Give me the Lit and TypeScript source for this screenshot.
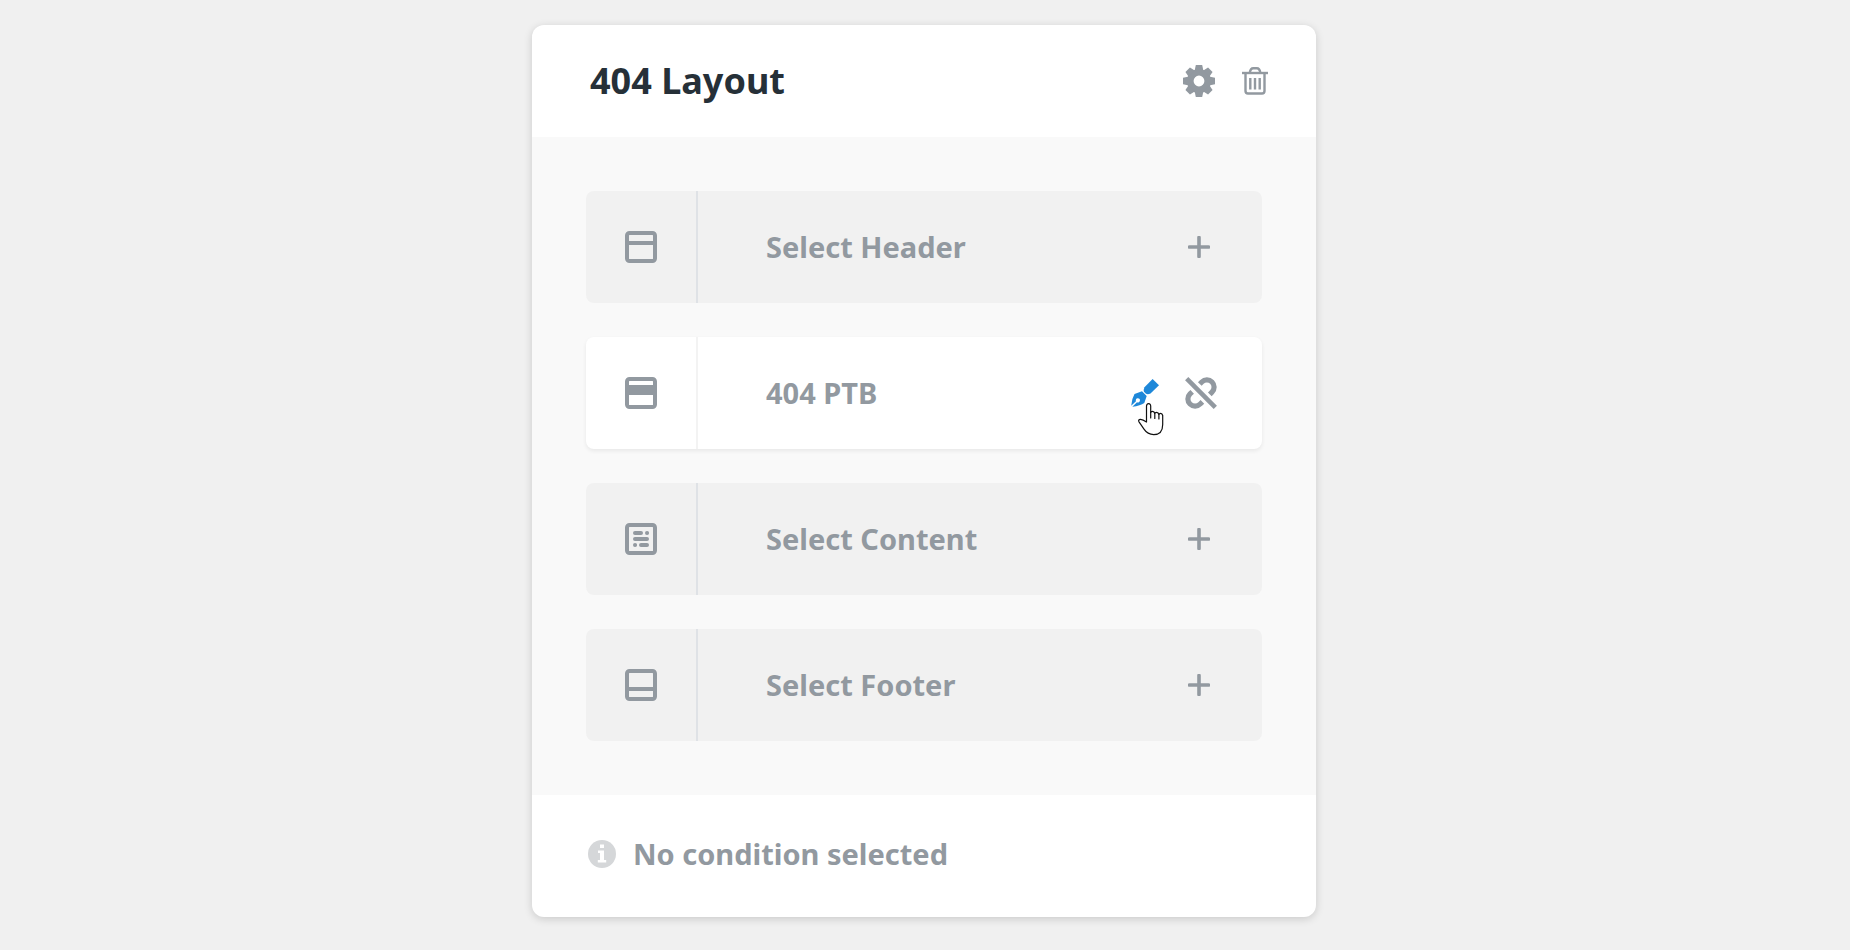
import { LitElement, html, css, svg } from "lit";
import { customElement, property } from "lit/decorators.js";

type Kind = "header" | "body" | "content" | "footer";

const frame = svg`<rect x="2" y="2" width="28" height="28" rx="2.500" fill="none" stroke="currentColor" stroke-width="4"/>`;

const slotIcons = {
  header: svg`${frame}<path d="M2 10h28v4H2z"/>`,
  body: svg`${frame}<path d="M2 8h28v10H2z"/>`,
  content: svg`${frame}<path d="M10 10h6M22 10h.1M10 16h12M10 22h.1M16 22h6" fill="none" stroke="currentColor" stroke-width="4" stroke-linecap="round"/>`,
  footer: svg`${frame}<path d="M2 18h28v4H2z"/>`,
};

const tooth = (angle: number) =>
  svg`<path d="M12.8 0h6.400l1.200 6h-8.800z" transform=${`rotate(${angle} 16 16)`}/>`;

const gearIcon = html`<svg width="32" height="32" viewBox="0 0 32 32" aria-hidden="true">
  <circle cx="16" cy="16" r="8.700" fill="none" stroke="currentColor" stroke-width="6.600"/>
  ${[0, 45, 90, 135, 180, 225, 270, 315].map(tooth)}
</svg>`;

const trashIcon = html`<svg width="26" height="28" viewBox="0 0 26 28" fill="none" stroke="currentColor" stroke-width="2.400" aria-hidden="true">
  <path d="M0 6h26"/>
  <path d="M3.500 6v18q0 2.500 2.500 2.500h14q2.500 0 2.500-2.500V6"/>
  <path d="M7.800 6q.5-4.700 3.500-4.700h3.500q3 0 3.500 4.700"/>
  <path d="M8.300 11v11.500M13 11v11.500M17.700 11v11.500"/>
</svg>`;

const plusIcon = html`<svg width="22" height="22" viewBox="0 0 22 22" aria-hidden="true">
  <path d="M1.500 11h19M11 1.500v19" fill="none" stroke="currentColor" stroke-width="3.600" stroke-linecap="round"/>
</svg>`;

const penIcon = html`<svg width="28" height="28" viewBox="0 0 28 28" aria-hidden="true">
  <path d="M21.600 0L28 6.200L19.500 14.500Q17 15.600 15 14.800L13 12.800Q12.300 10.500 13.500 8.200z"/>
  <path fill-rule="evenodd" d="M3.500 15L11 12.300L15.700 17L13.300 24Q9.500 26.800 1.300 27.800L6 23.200A2.100 2.100 0 1 0 5 22.200L.2 26.700Q.6 20 3.500 15z"/>
</svg>`;

const unlinkIcon = html`<svg width="32" height="32" viewBox="0 0 32 32" fill="none" stroke="currentColor" aria-hidden="true">
  <path d="M1.700 1.700L30.300 30.300" stroke-width="4.600"/>
  <path d="M14.800 7L16.800 5A7.200 7.200 0 0 1 27 15.200L24.800 17.400" stroke-width="5.200"/>
  <path d="M7.200 14.800L5 16.800A7.200 7.200 0 0 0 15.200 27L17.400 24.800" stroke-width="5.200"/>
</svg>`;

const infoIcon = html`<svg width="28" height="28" viewBox="0 0 28 28" aria-hidden="true">
  <circle cx="14" cy="14" r="14"/>
  <path fill="#fff" d="M12 4.500h4v3.500h-4zM10 10.500h6V20h2.200v2.500H9.800V20H12v-7h-2z"/>
</svg>`;

const handPointer = html`<svg class="pointer" width="26" height="33" viewBox="0 0 26 33" aria-hidden="true">
  <path d="M8.500 19V3.200Q8.500.7 10.600.7T12.700 3.200V9.500Q12.900 8.300 14.600 8.300T16.800 10.500Q17 9.300 18.700 9.300T20.900 11.500Q21.200 10.300 22.700 10.300T24.700 12.500V21.500C24.700 28 21.500 31.600 15.700 31.600C10.500 31.600 8.200 29.500 6 26.200L1 18.800Q.2 17.200 1.300 16.600C3.500 15.500 6 17.200 8.500 19z" fill="#fff" stroke="#111" stroke-width="1.200" stroke-linejoin="round"/>
  <path d="M12.700 9v6M16.800 10.500v5M20.900 11.500v4.500" fill="none" stroke="#111" stroke-width="1.200" stroke-linecap="round"/>
</svg>`;

const iconButton = css`
  button {
    display: flex;
    align-items: center;
    justify-content: center;
    padding: 0;
    border: 0;
    background: none;
    color: inherit;
    cursor: pointer;
  }
  svg {
    display: block;
    fill: currentColor;
  }
  svg[fill="none"] {
    fill: none;
  }
`;

@customElement("layout-slot")
export class LayoutSlot extends LitElement {
  @property() kind: Kind = "header";
  @property() label = "";
  @property({ type: Boolean, reflect: true }) filled = false;

  static styles = [
    iconButton,
    css`
      :host {
        display: grid;
        grid-template-columns: 112px 1fr auto;
        align-items: center;
        min-height: 112px;
        border-radius: 8px;
        background: #f1f1f1;
        color: #9299a0;
      }
      :host([filled]) {
        background: #fff;
        box-shadow: 0 2px 4px rgba(0, 0, 0, 0.07);
      }
      .kind {
        align-self: stretch;
        display: flex;
        align-items: center;
        justify-content: center;
        border-right: 2px solid #dfe2e6;
      }
      :host([filled]) .kind {
        border-color: #f3f3f3;
      }
      .label {
        padding-left: 68px;
        font-size: 29px;
        line-height: 40px;
        font-weight: 700;
      }
      .actions {
        display: flex;
        align-items: center;
        gap: 26px;
        padding-right: 45px;
      }
      .add {
        width: 32px;
        height: 32px;
        padding-right: 4px;
      }
      .edit {
        position: relative;
        color: #1e88d9;
      }
      .pointer {
        position: absolute;
        left: 7px;
        top: 24px;
      }
    `,
  ];

  render() {
    return html`
      <span class="kind">
        <svg width="32" height="32" viewBox="0 0 32 32" aria-hidden="true">${slotIcons[this.kind]}</svg>
      </span>
      <span class="label">${this.label}</span>
      <span class="actions">
        ${this.filled
          ? html`<button class="edit" aria-label="Edit ${this.label}">${penIcon}${handPointer}</button>
              <button aria-label="Unlink ${this.label}">${unlinkIcon}</button>`
          : html`<button class="add" aria-label=${this.label}>${plusIcon}</button>`}
      </span>
    `;
  }
}

@customElement("app-root")
export class AppRoot extends LitElement {
  static styles = [
    iconButton,
    css`
      :host {
        display: flex;
        justify-content: center;
        box-sizing: border-box;
        min-height: 100vh;
        align-items: flex-start;
        padding: 25px 18px 30px 16px;
        background: #f0f0f0;
        color: #9299a0;
        font-family: "Noto Sans", "Open Sans", sans-serif;
      }
      .card {
        flex: 0 1 784px;
        border-radius: 12px;
        background: #fff;
        box-shadow: 0 2px 8px rgba(0, 0, 0, 0.16);
      }
      .head {
        display: flex;
        align-items: center;
        justify-content: space-between;
        padding: 31px 48px 31px 58px;
      }
      h2 {
        margin: 0;
        color: #263038;
        font-size: 36px;
        line-height: 50px;
        font-weight: 700;
      }
      .tools {
        display: flex;
        align-items: center;
        gap: 27px;
      }
      .slots {
        display: grid;
        gap: 34px;
        padding: 54px;
        background: #f9f9f9;
      }
      .foot {
        display: flex;
        align-items: center;
        gap: 17px;
        padding: 39px 54px 43px 56px;
        font-size: 29px;
        line-height: 40px;
        font-weight: 700;
      }
      .info {
        color: #d5d7d9;
      }
    `,
  ];

  private slots: { kind: Kind; label: string; filled?: boolean }[] = [
    { kind: "header", label: "Select Header" },
    { kind: "body", label: "404 PTB", filled: true },
    { kind: "content", label: "Select Content" },
    { kind: "footer", label: "Select Footer" },
  ];

  render() {
    return html`
      <section class="card">
        <header class="head">
          <h2>404 Layout</h2>
          <div class="tools">
            <button aria-label="Layout settings">${gearIcon}</button>
            <button aria-label="Delete layout">${trashIcon}</button>
          </div>
        </header>
        <div class="slots">
          ${this.slots.map(
            (s) => html`<layout-slot .kind=${s.kind} .label=${s.label} .filled=${!!s.filled}></layout-slot>`
          )}
        </div>
        <footer class="foot">
          <span class="info">${infoIcon}</span>
          <span>No condition selected</span>
        </footer>
      </section>
    `;
  }
}
